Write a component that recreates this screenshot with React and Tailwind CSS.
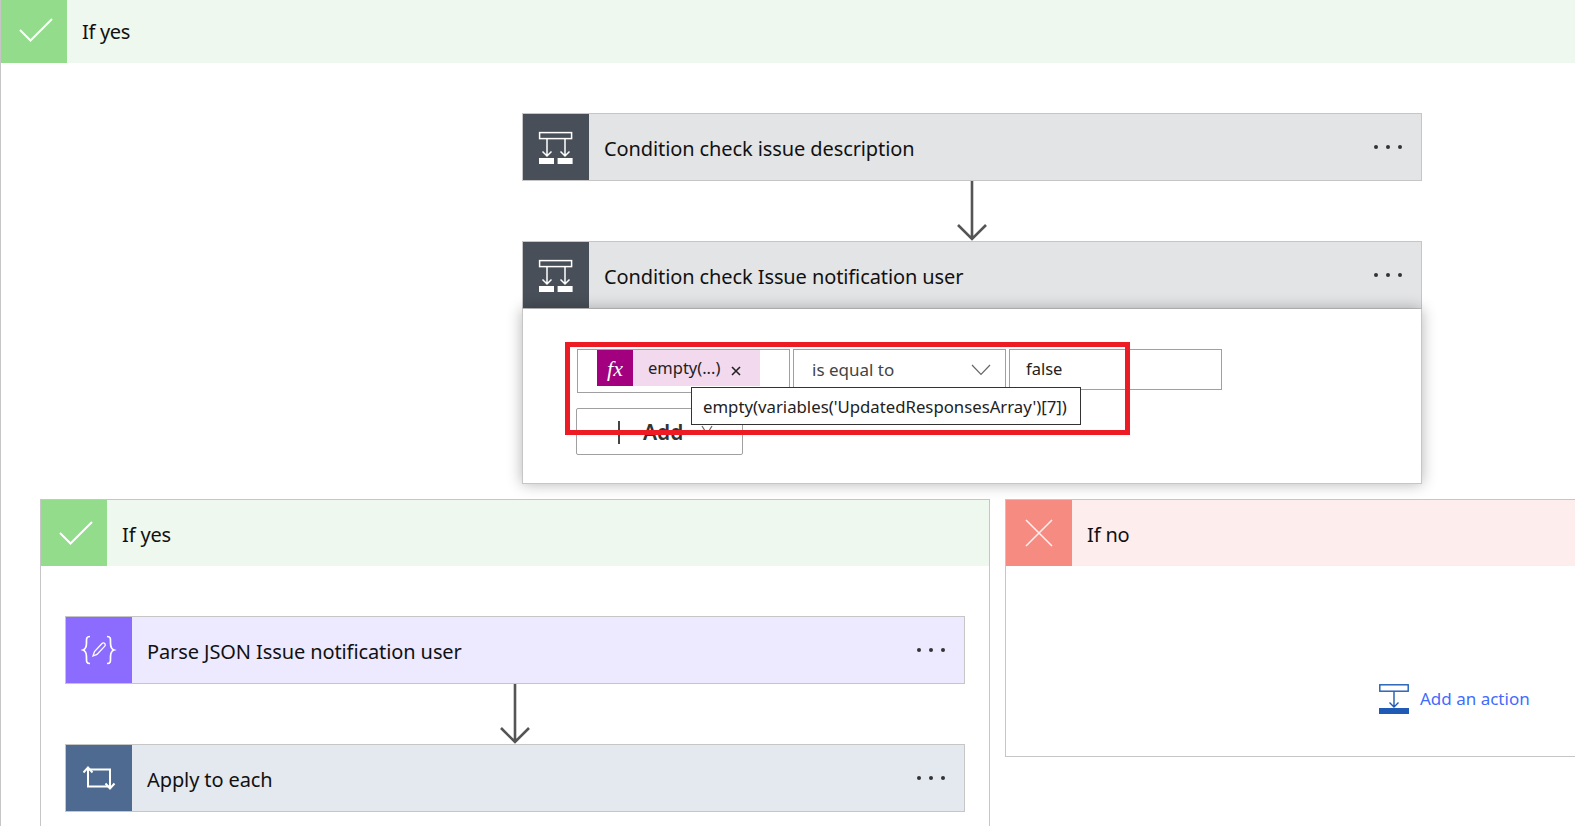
const FONT = "font-['Noto_Sans','Open_Sans',sans-serif]";

function ConditionIcon() {
  return (
    <svg className="mr-[2px] mt-[3px]" width="36" height="36" viewBox="0 0 36 36" fill="none" stroke="white" strokeWidth="1.5">
      <rect x="2.6" y="1.6" width="32" height="6" strokeWidth="1.5" />
      <path d="M10 8V25M5.5 20.5L10 25L14.5 20.5M28 8V25M23.5 20.5L28 25L32.5 20.5" />
      <rect x="2" y="27" width="15" height="6" fill="white" stroke="none" />
      <rect x="20.6" y="27" width="15" height="6" fill="white" stroke="none" />
    </svg>
  );
}

function ParseIcon() {
  return (
    <svg width="36" height="32" viewBox="0 0 36 32" fill="none" stroke="white" strokeWidth="1.7">
      <path d="M9 2.5C5 2.5 5.5 5 5.5 9C5.5 13 5 15 2 16C5 17 5.5 19 5.5 23C5.5 27 5 29.5 9 29.5" />
      <path d="M26 2.5C30 2.5 29.5 5 29.5 9C29.5 13 30 15 33 16C30 17 29.5 19 29.5 23C29.5 27 30 29.5 26 29.5" />
      <path d="M12 22L13.5 17.5L21 9.5C22 8.5 23.5 9 24 9.8C24.6 10.8 24.4 11.6 23.6 12.4L16 20.4Z" strokeWidth="1.3" />
    </svg>
  );
}

function LoopIcon() {
  return (
    <svg width="34" height="24" viewBox="0 0 34 24" fill="none" stroke="white" strokeWidth="2">
      <path d="M1.5 6.5L6 1.5L10.5 6.5M6 2V20.5H27" />
      <path d="M23.5 17.5L28 22.5L32.5 17.5M28 22V3.5H7" />
    </svg>
  );
}

function CheckIcon({ className }) {
  return (
    <svg className={className} width="34" height="24" viewBox="0 0 34 24" fill="none" stroke="white" strokeWidth="2">
      <path d="M1 12L11.5 22.5L33 1" />
    </svg>
  );
}

function CrossIcon() {
  return (
    <svg width="28" height="28" viewBox="0 0 28 28" fill="none" stroke="#fdeeee" strokeWidth="1.6">
      <path d="M1 1L27 27M27 1L1 27" />
    </svg>
  );
}

function Dots() {
  return (
    <div className="mb-[1px] ml-auto mr-[19px] flex gap-2 self-center">
      <span className="h-1 w-1 rounded-full bg-[#333333]" />
      <span className="h-1 w-1 rounded-full bg-[#333333]" />
      <span className="h-1 w-1 rounded-full bg-[#333333]" />
    </div>
  );
}

function Card({ icon, iconBg, bg, title }) {
  return (
    <div className={`flex h-[68px] w-[900px] border border-[#c6c6c6] ${bg}`}>
      <div className={`flex w-[66px] shrink-0 items-center justify-center ${iconBg}`}>{icon}</div>
      <div className="pl-[15px] text-[20px] leading-[70px] tracking-[-0.1px] text-[#111111]">{title}</div>
      <Dots />
    </div>
  );
}

function Arrow() {
  return (
    <div className="flex h-[60px] w-[900px] justify-center">
      <svg width="32" height="60" viewBox="0 0 32 60" fill="none" stroke="#555555" strokeWidth="2.6">
        <path d="M16 0V58M2 44L16 58L30 44" />
      </svg>
    </div>
  );
}

function BranchHeader({ icon, iconBg, bg, title }) {
  return (
    <div className={`flex h-[66px] ${bg}`}>
      <div className={`flex w-[66px] shrink-0 items-center justify-center ${iconBg}`}>{icon}</div>
      <div className="pl-[15px] text-[20px] leading-[70px] tracking-[-0.15px] text-[#111111]">{title}</div>
    </div>
  );
}

export default function App() {
  return (
    <div className={`h-[826px] w-[1575px] overflow-hidden bg-white ${FONT}`}>
      <div className="h-full border-l border-[#c6c6c6]">
        <div className="flex h-[63px] bg-[#eef8ee]">
          <div className="flex w-[66px] shrink-0 items-center justify-center bg-[#92dc8c]">
            <CheckIcon className="mb-[3px] ml-[3px]" />
          </div>
          <div className="pl-[15px] text-[20px] leading-[63px] tracking-[-0.3px] text-[#111111]">If yes</div>
        </div>

        <div className="pl-[39px]">
          <div className="ml-[482px] w-[900px] pt-[50px]">
            <Card icon={<ConditionIcon />} iconBg="bg-[#484f58]" bg="bg-[#e3e4e6]" title="Condition check issue description" />
            <Arrow />
            <Card icon={<ConditionIcon />} iconBg="bg-[#484f58]" bg="bg-[#e3e4e6]" title="Condition check Issue notification user" />
            <div className="relative z-10 h-[175px] border border-t-0 border-[#c6c6c6] bg-white pl-[54px] pt-[40px] shadow-[0_0_14px_rgba(0,0,0,0.3)]">
              <div className="flex items-start gap-[3px]">
                <div className="h-[44px] w-[213px] border border-[#a0a0a0] pl-[19px]">
                  <div className="flex h-[36px] w-[163px] items-center bg-[#f2d9ee]">
                    <div className="flex h-full w-[36px] items-center justify-center bg-[#a2007f] font-['Liberation_Serif',serif] text-[22px] italic text-white">
                      fx
                    </div>
                    <span className="pl-[15px] text-[16.5px] text-[#222222]">empty(...)</span>
                    <svg className="ml-[11px] mt-[6px]" width="10" height="10" viewBox="0 0 10 10" stroke="#222222" strokeWidth="1.6">
                      <path d="M1 1L9 9M9 1L1 9" />
                    </svg>
                  </div>
                </div>
                <div className="flex h-[42px] w-[213px] items-center border border-[#a0a0a0] pl-[18px] pr-[14px] text-[17px] text-[#444444]">
                  is equal to
                  <svg className="ml-auto" width="20" height="12" viewBox="0 0 20 12" fill="none" stroke="#666666" strokeWidth="1.2">
                    <path d="M1 1L10 10.5L19 1" />
                  </svg>
                </div>
                <div className="flex h-[41px] w-[213px] items-center border border-[#a0a0a0] pl-[16px] text-[16.5px] text-[#222222]">
                  false
                </div>
              </div>
              <div className="-ml-px mt-[15px] flex h-[47px] w-[167px] items-center rounded-[2px] border border-[#a0a0a0] pl-[41px] pt-[2px] text-[21px] font-semibold text-[#333333]">
                <span className="mr-[23px] h-[23px] w-[2px] bg-[#444444]" />
                Add
                <svg className="mb-[5px] ml-[18px]" width="12" height="10" viewBox="0 0 12 10" fill="none" stroke="#666666" strokeWidth="1.2">
                  <path d="M1 1L6 9L11 1" />
                </svg>
              </div>

              <div className="pointer-events-none absolute left-[42px] top-[33px] h-[93px] w-[565px] border-[5px] border-[#ed1c24]" />
              <div className="absolute left-[168px] top-[78px] flex h-[38px] w-[390px] items-center whitespace-nowrap border border-[#333333] bg-white pl-[11px] pt-[1px] text-[16.75px] text-[#222222]">
                empty(variables('UpdatedResponsesArray')[7])
              </div>
            </div>
          </div>

          <div className="mt-[15px] flex items-start gap-[15px]">
            <div className="h-[340px] w-[950px] shrink-0 border-l border-r border-t border-[#c6c6c6]">
              <BranchHeader icon={<CheckIcon className="ml-[3px]" />} iconBg="bg-[#92dc8c]" bg="bg-[#eef8ee]" title="If yes" />
              <div className="pl-[24px] pt-[50px]">
                <Card icon={<ParseIcon />} iconBg="bg-[#8c6cff]" bg="bg-[#ede9fe]" title="Parse JSON Issue notification user" />
                <Arrow />
                <Card icon={<LoopIcon />} iconBg="bg-[#4e6a90]" bg="bg-[#e4e8ef]" title="Apply to each" />
              </div>
            </div>

            <div className="h-[258px] w-[620px] shrink-0 border border-[#c6c6c6]">
              <BranchHeader icon={<CrossIcon />} iconBg="bg-[#f58b81]" bg="bg-[#fdeded]" title="If no" />
              <div className="flex items-center pl-[373px] pt-[118px]">
                <svg width="30" height="30" viewBox="0 0 30 30" fill="none" stroke="#1f5bb5" strokeWidth="1.4">
                  <rect x="0.8" y="0.8" width="28.4" height="6.4" />
                  <path d="M15 7.5V23M10.5 18.5L15 23L19.5 18.5" />
                  <rect x="0" y="24" width="30" height="6" fill="#1f5bb5" stroke="none" />
                </svg>
                <span className="pl-[11px] text-[17px] text-[#3f6bff]">Add an action</span>
              </div>
            </div>
          </div>
        </div>
      </div>
    </div>
  );
}
